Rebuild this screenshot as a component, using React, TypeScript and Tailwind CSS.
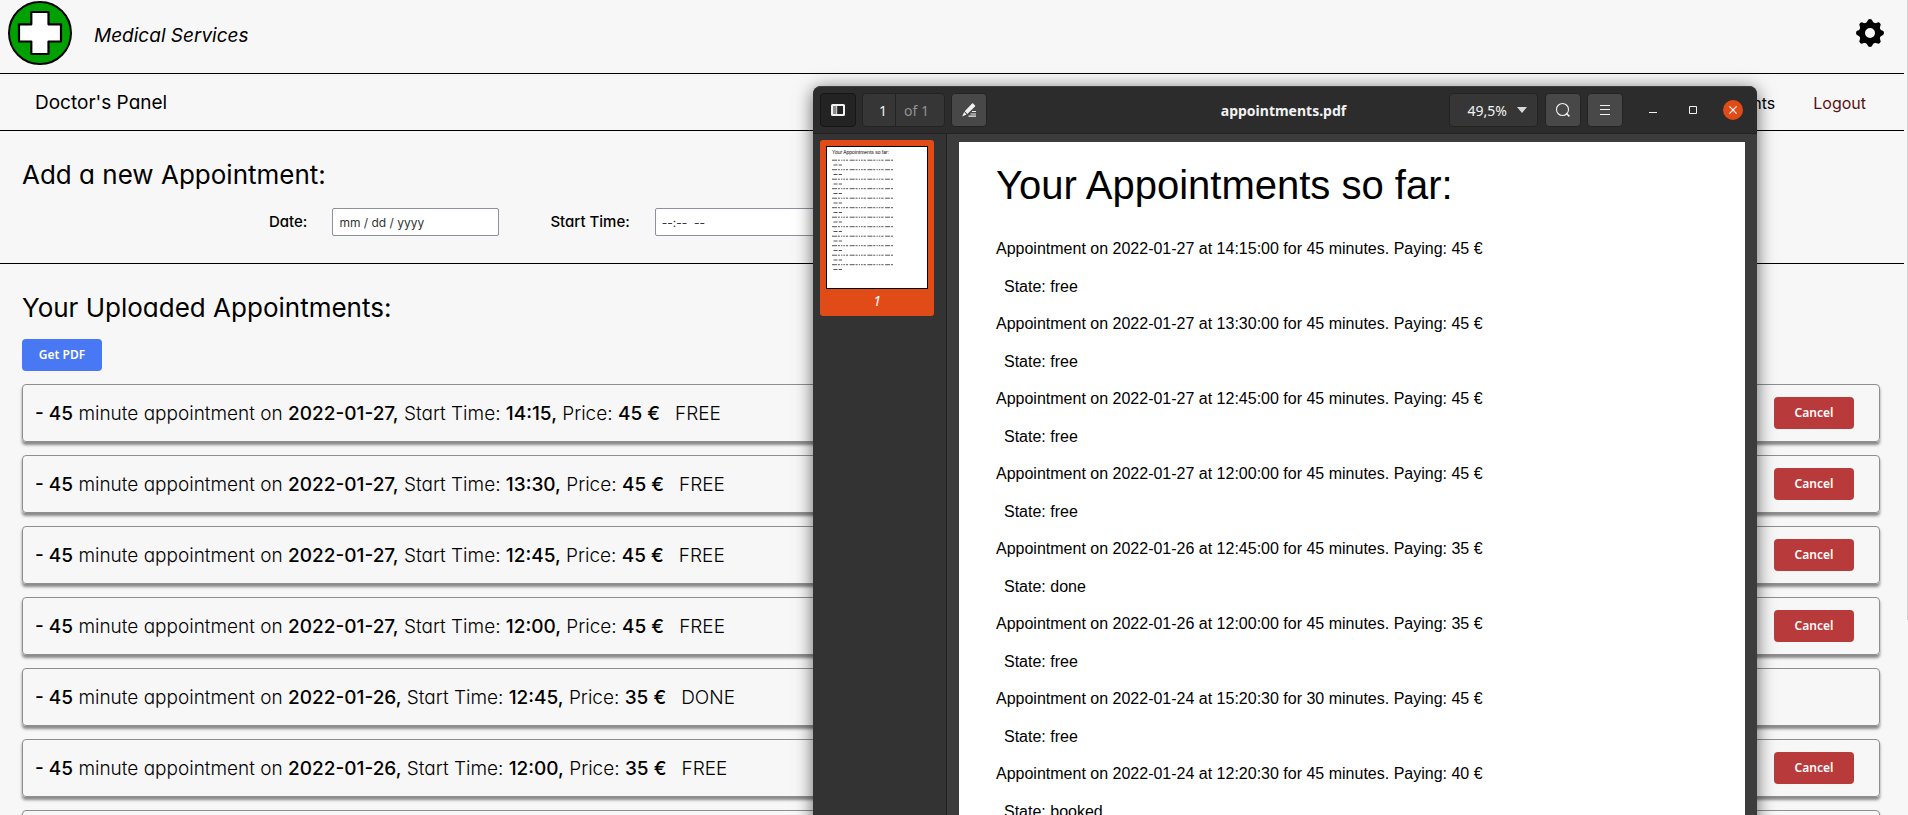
import { useId } from "react";

type State = "free" | "done" | "booked" | "cancelled";

interface Appointment {
  date: string;
  start: string;
  seconds: string;
  minutes: number;
  price: number;
  state: State;
}

const appointments: Appointment[] = [
  { date: "2022-01-27", start: "14:15", seconds: "00", minutes: 45, price: 45, state: "free" },
  { date: "2022-01-27", start: "13:30", seconds: "00", minutes: 45, price: 45, state: "free" },
  { date: "2022-01-27", start: "12:45", seconds: "00", minutes: 45, price: 45, state: "free" },
  { date: "2022-01-27", start: "12:00", seconds: "00", minutes: 45, price: 45, state: "free" },
  { date: "2022-01-26", start: "12:45", seconds: "00", minutes: 45, price: 35, state: "done" },
  { date: "2022-01-26", start: "12:00", seconds: "00", minutes: 45, price: 35, state: "free" },
  { date: "2022-01-24", start: "15:20", seconds: "30", minutes: 30, price: 45, state: "free" },
  { date: "2022-01-24", start: "12:20", seconds: "30", minutes: 45, price: 40, state: "booked" },
];

function Logo() {
  return (
    <svg viewBox="0 0 64 64" className="size-16" aria-hidden="true">
      <circle cx="32" cy="32" r="31" fill="#00a000" stroke="#000" strokeWidth="2" />
      <path
        d="M23.3 11h17.2v12.3H53v17.2H40.5V53H23.3V40.5H11V23.3h12.3z"
        fill="#fff"
        stroke="#000"
        strokeWidth="2.2"
        strokeLinejoin="round"
      />
    </svg>
  );
}

function Gear() {
  const teeth = [0, 45, 90, 135, 180, 225, 270, 315];
  return (
    <svg viewBox="0 0 28 28" className="size-7" aria-hidden="true">
      <circle cx="14" cy="14" r="8" fill="none" stroke="#000" strokeWidth="6" />
      {teeth.map((angle) => (
        <path
          key={angle}
          d="M8.5 5Q11 4 11.6 1.8Q12 0 14 0Q16 0 16.4 1.8Q17 4 19.5 5z"
          transform={`rotate(${angle} 14 14)`}
        />
      ))}
    </svg>
  );
}

function Field({ label, placeholder }: { label: string; placeholder: string }) {
  const id = useId();
  return (
    <div className="flex items-center gap-[25px]">
      <label htmlFor={id} className="text-[15px] font-medium">
        {label}
      </label>
      <input
        id={id}
        type="text"
        placeholder={placeholder}
        className="h-7 w-[167px] rounded-[2px] border border-[#8f8f9d] bg-white px-1.5 text-[12px] placeholder:text-[#333]"
      />
    </div>
  );
}

function AppointmentCard({ item }: { item: Appointment }) {
  return (
    <li className="flex h-[58px] shrink-0 items-center justify-between rounded-[4px] border border-[#8e8e8e] pr-[25px] pl-3 shadow-[0_3px_3px_#888]">
      <p className="pt-0.5 text-[19px] font-light">
        <b className="font-medium">- {item.minutes}</b> minute appointment on{" "}
        <b className="font-medium">{item.date},</b> Start Time:{" "}
        <b className="font-medium">{item.start},</b> Price:{" "}
        <b className="font-medium">{item.price} €</b>
        <span className="ml-[15px] uppercase">{item.state}</span>
      </p>
      {item.state !== "done" && (
        <button
          type="button"
          className="h-8 w-20 rounded-[4px] bg-[#b93a3a] font-['Noto_Sans',sans-serif] text-[12px] font-semibold text-white"
        >
          Cancel
        </button>
      )}
    </li>
  );
}

function Thumbnail() {
  const rows = Array.from({ length: 12 }, (_, i) => i);
  return (
    <svg viewBox="0 0 102 143" className="h-[143px] w-[102px]" role="img" aria-label="Page 1">
      <rect x="0.5" y="0.5" width="101" height="142" fill="#fff" stroke="#000" />
      <text x="6" y="8" fontSize="5" fontFamily="Liberation Sans, sans-serif">
        Your Appointments so far:
      </text>
      {rows.map((row) => (
        <g key={row} stroke="#555" strokeWidth="1">
          <path
            d={`M6 ${14.2 + row * 9.5}h61`}
            strokeDasharray="5 0.9 2 1.2 1.2 1 1.6 1 2.2 1.6"
          />
          <path d={`M7.5 ${19 + row * 9.5}h8.5`} strokeDasharray="4 1.2 5 1" />
        </g>
      ))}
    </svg>
  );
}

function TitleBar() {
  return (
    <header className="flex h-[48px] items-center rounded-t-[8px] border-t border-b border-t-[#3f3f3f] border-b-[#212121] bg-[#2c2c2c] pr-[14px] pl-[7px] font-['Noto_Sans',sans-serif] text-[14px] text-[#f2f2f2]">
      <div className="flex flex-1 items-center gap-1.5">
        <button
          type="button"
          aria-label="Side pane"
          className="flex h-[34px] w-9 items-center justify-center rounded-[4px] border border-[#161616] bg-[#232323]"
        >
          <svg viewBox="0 0 14 12" className="h-3 w-3.5" aria-hidden="true">
            <rect x="1" y="1" width="12" height="10" rx="0.5" fill="none" stroke="#f2f2f2" strokeWidth="2" />
            <rect x="2" y="2" width="3.4" height="8" fill="#8a8a8a" />
            <path d="M5.7 2v8" stroke="#f2f2f2" strokeWidth="0.9" />
          </svg>
        </button>
        <div className="flex h-[34px] items-center rounded-[4px] border border-[#232323] bg-[#363636]">
          <input
            aria-label="Page number"
            defaultValue="1"
            className="h-full w-[33px] border-r border-[#232323] pr-2 text-right"
          />
          <span className="w-12 pl-2 text-[#929292]">of 1</span>
        </div>
        <button
          type="button"
          aria-label="Annotate"
          className="flex h-[34px] w-9 items-center justify-center rounded-[4px] border border-[#232323] bg-[#484848]"
        >
          <svg viewBox="0 0 16 16" className="size-4" fill="#f2f2f2" aria-hidden="true">
            <path d="M12.2 1.6 14 3.4a.8.8 0 0 1 0 1.1L6.3 12 3.7 9.3l7.4-7.7a.8.8 0 0 1 1.1 0zM3.1 10.1l2.4 2.4L1.2 14.6z" />
            <path d="M11 9h4v1.1h-4zM9.5 11.4H15v1.1H9.5zM7.5 13.6H15v1.1H7.5z" />
          </svg>
        </button>
      </div>
      <h2 className="pl-1 text-[14px] font-bold">appointments.pdf</h2>
      <div className="flex flex-1 items-center justify-end">
        <button
          type="button"
          className="flex h-[34px] w-[89px] items-center justify-end gap-2.5 rounded-[4px] border border-[#232323] bg-[#363636] pr-[10px]"
        >
          49,5%
          <svg viewBox="0 0 10 6" className="h-1.5 w-2.5" fill="#d8d8d8" aria-hidden="true">
            <path d="M0 0h10L5 6z" />
          </svg>
        </button>
        <button
          type="button"
          aria-label="Find"
          className="ml-[7px] flex h-[34px] w-9 items-center justify-center rounded-[4px] border border-[#232323] bg-[#484848]"
        >
          <svg viewBox="0 0 16 16" className="size-4" fill="none" stroke="#f2f2f2" strokeWidth="1.1" aria-hidden="true">
            <circle cx="7.5" cy="7.5" r="6" />
            <path d="M11.2 11.2l3.2 3.2" strokeWidth="1.6" />
          </svg>
        </button>
        <button
          type="button"
          aria-label="Menu"
          className="ml-[6px] flex h-[34px] w-9 items-center justify-center rounded-[4px] border border-[#232323] bg-[#484848]"
        >
          <svg viewBox="0 0 10 10" className="size-2.5" stroke="#f2f2f2" strokeWidth="1" aria-hidden="true">
            <path d="M0 .5h10M0 4.5h10M0 9.5h10" />
          </svg>
        </button>
        <button type="button" aria-label="Minimize" className="ml-5 flex size-5 items-center justify-center">
          <svg viewBox="0 0 8 8" className="size-2" fill="#f2f2f2" aria-hidden="true">
            <path d="M0 6h8v1H0z" />
          </svg>
        </button>
        <button type="button" aria-label="Maximize" className="ml-5 flex size-5 items-center justify-center">
          <svg viewBox="0 0 8 8" className="size-2" fill="none" stroke="#f2f2f2" aria-hidden="true">
            <path d="M.5.5h7v7h-7z" />
          </svg>
        </button>
        <button
          type="button"
          aria-label="Close"
          className="ml-5 flex size-5 items-center justify-center rounded-full bg-[#e04b17]"
        >
          <svg viewBox="0 0 8 8" className="size-2" stroke="#fff" strokeWidth="1.2" aria-hidden="true">
            <path d="M.4.4l7.2 7.2M7.6.4L.4 7.6" />
          </svg>
        </button>
      </div>
    </header>
  );
}

function PdfWindow() {
  return (
    <section
      aria-label="appointments.pdf"
      className="absolute top-[86px] -bottom-8 left-[813px] flex w-[944px] flex-col rounded-t-[8px] bg-[#3c3c3c] shadow-[0_3px_18px_rgba(0,0,0,0.6)]"
    >
      <TitleBar />
      <div className="flex min-h-0 flex-1">
        <aside className="w-[134px] border-r border-[#212121] bg-[#333] py-1.5 pl-[7px]">
          <figure className="flex w-[114px] flex-col items-center rounded-[3px] bg-[#e04b17] pt-1.5 pb-1">
            <Thumbnail />
            <figcaption className="font-['Noto_Sans',sans-serif] text-[14px] leading-[23px] text-white italic">1</figcaption>
          </figure>
        </aside>
        <div className="flex-1 overflow-hidden pt-2 pr-3 pl-3">
          <article className="min-h-full bg-white pt-[15px] pl-[37px] font-['Liberation_Sans',sans-serif] text-black">
            <h2 className="mb-[17px] text-[40px] leading-[56px]">Your Appointments so far:</h2>
            <ul>
              {appointments.map((item) => (
                <li key={item.date + item.start} className="text-[16px]">
                  <p className="flex h-[38px] items-center">
                    Appointment on {item.date} at {item.start}:{item.seconds} for {item.minutes} minutes. Paying:{" "}
                    {item.price} €
                  </p>
                  <p className="flex h-[37px] items-center pl-2">State: {item.state}</p>
                </li>
              ))}
            </ul>
          </article>
        </div>
      </div>
    </section>
  );
}

export default function App() {
  return (
    <div className="relative h-screen overflow-hidden bg-[#f7f7f7] pr-1 font-['Inter',sans-serif] text-black [font-feature-settings:'cv11']">
      <header className="flex h-[74px] items-start justify-between border-b border-black pt-px pr-5 pl-2">
        <div className="flex items-center gap-[22px]">
          <Logo />
          <span className="pt-1.5 text-[19px] italic">Medical Services</span>
        </div>
        <button type="button" aria-label="Settings" className="flex h-16 items-center">
          <Gear />
        </button>
      </header>

      <nav className="flex h-[57px] items-center justify-between border-b border-black pt-0.5 pr-[38px] pl-[35px]">
        <a href="#panel" className="text-[19px]">
          Doctor's Panel
        </a>
        <div className="flex gap-[38px] text-[16px]">
          <a href="#appointments">Appointments</a>
          <a href="#logout" className="text-[#5c1010]">
            Logout
          </a>
        </div>
      </nav>

      <main>
        <section className="h-[133px] border-b border-black px-[22px] pt-6">
          <h1 className="text-[26px] leading-10">Add a new Appointment:</h1>
          <form className="flex gap-[51px] pt-[13px] pl-[247px]">
            <Field label="Date:" placeholder="mm / dd / yyyy" />
            <Field label="Start Time:" placeholder="--:--  --" />
          </form>
        </section>

        <section className="pt-6 pr-6 pl-[22px]">
          <h1 className="text-[26px] leading-10">Your Uploaded Appointments:</h1>
          <button
            type="button"
            className="mt-[11px] block h-8 w-20 rounded-[4px] bg-[#4878f3] font-['Noto_Sans',sans-serif] text-[12px] font-semibold text-white"
          >
            Get PDF
          </button>
          <ul className="mt-[13px] flex flex-col gap-[13px]">
            {appointments.slice(0, 7).map((item) => (
              <AppointmentCard key={item.date + item.start} item={item} />
            ))}
          </ul>
        </section>
      </main>

      <PdfWindow />
      <div aria-hidden="true" className="absolute top-0 right-0 h-[620px] w-px bg-[#cfcfcf]" />
    </div>
  );
}
